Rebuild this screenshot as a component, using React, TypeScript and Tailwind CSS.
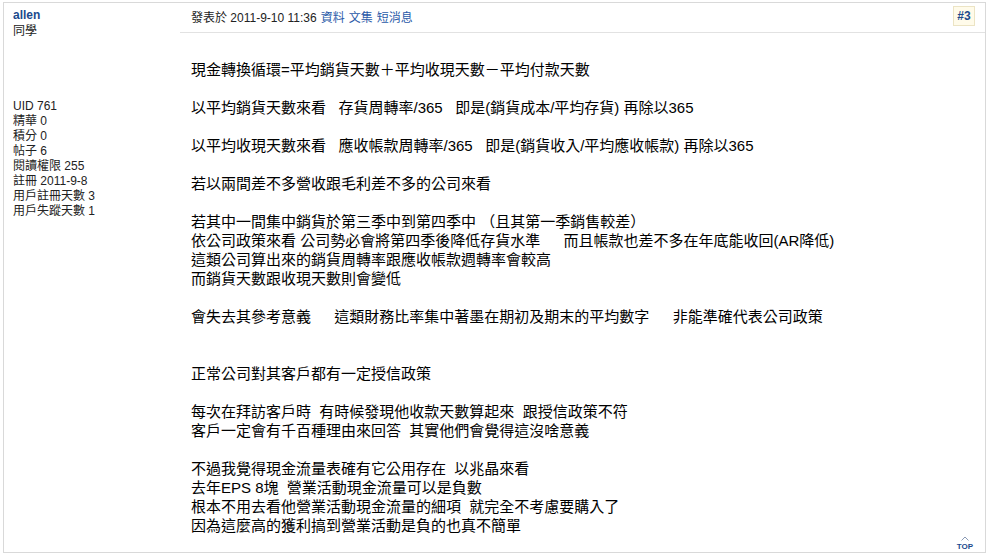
import React from 'react';

const FONT = "font-['Liberation_Sans','Noto_Sans_CJK_TC',sans-serif]";

const stats: [string, string][] = [
  ['UID', '761'],
  ['精華', '0'],
  ['積分', '0'],
  ['帖子', '6'],
  ['閱讀權限', '255'],
  ['註冊', '2011-9-8'],
  ['用戶註冊天數', '3'],
  ['用戶失蹤天數', '1'],
];

// post body, empty strings are blank lines
const lines: string[] = [
  '現金轉換循環=平均銷貨天數＋平均收現天數－平均付款天數',
  '',
  '以平均銷貨天數來看   存貨周轉率/365   即是(銷貨成本/平均存貨) 再除以365',
  '',
  '以平均收現天數來看   應收帳款周轉率/365   即是(銷貨收入/平均應收帳款) 再除以365',
  '',
  '若以兩間差不多營收跟毛利差不多的公司來看',
  '',
  '若其中一間集中銷貨於第三季中到第四季中 （且其第一季銷售較差）',
  '依公司政策來看 公司勢必會將第四季後降低存貨水準　  而且帳款也差不多在年底能收回(AR降低)',
  '這類公司算出來的銷貨周轉率跟應收帳款週轉率會較高',
  '而銷貨天數跟收現天數則會變低',
  '',
  '會失去其參考意義　  這類財務比率集中著墨在期初及期末的平均數字　  非能準確代表公司政策',
  '',
  '',
  '正常公司對其客戶都有一定授信政策',
  '',
  '每次在拜訪客戶時  有時候發現他收款天數算起來  跟授信政策不符',
  '客戶一定會有千百種理由來回答  其實他們會覺得這沒啥意義',
  '',
  '不過我覺得現金流量表確有它公用存在  以兆晶來看',
  '去年EPS 8塊  營業活動現金流量可以是負數',
  '根本不用去看他營業活動現金流量的細項  就完全不考慮要購入了',
  '因為這麼高的獲利搞到營業活動是負的也真不簡單',
];

function Sidebar() {
  return (
    <div className="w-[176px] shrink-0 pl-[9px] pt-[4px] text-[12px] text-[#222]">
      <div className="leading-[16px]">
        <div className="font-bold text-[#1b4a8c]">allen</div>
        <div>同學</div>
      </div>
      <div className="mt-[60px] leading-[15px]">
        {stats.map(([k, v]) => (
          <div key={k}>
            {k} {v}
          </div>
        ))}
      </div>
    </div>
  );
}

function PostHeader() {
  return (
    <div className="h-[30px] flex items-center justify-between border-b border-[#e2e2e2] pl-[11px] pr-[10px] text-[12px]">
      <div className="flex items-center gap-[4px] text-[#222]">
        <span>發表於 2011-9-10 11:36</span>
        <span className="text-[#2a5aa8]">資料</span>
        <span className="text-[#2a5aa8]">文集</span>
        <span className="text-[#2a5aa8]">短消息</span>
      </div>
      <span className="mt-[-3px] h-[20px] w-[22px] flex items-center justify-center border border-[#ece4c4] bg-[#fffbea] font-bold text-[#1b4a8c] leading-none">
        #3
      </span>
    </div>
  );
}

export default function App() {
  return (
    <div className={`w-[990px] h-[556px] bg-white pt-[2px] pl-[3px] ${FONT}`}>
      <div className="w-[983px] h-[551px] border border-[#d9d9d9] flex">
        <Sidebar />

        <div className="flex-1 flex flex-col min-w-0">
          <PostHeader />

          {/* message body */}
          <div className="flex-1 pl-[11px] pt-[27px] text-[15px] leading-[19px] text-black">
            {lines.map((line, i) => (
              <div key={i} className="h-[19px] whitespace-pre">
                {line || '\u00a0'}
              </div>
            ))}
          </div>

          <div className="flex justify-end pr-[12px] pb-[1px]">
            <div className="flex flex-col items-center text-[#1b4a8c]">
              <svg width="8" height="5" viewBox="0 0 8 5" className="mb-[1px]">
                <path d="M0.5 4.5 L4 1 L7.5 4.5" fill="none" stroke="#8a9ab5" strokeWidth="1" />
              </svg>
              <span className="text-[8px] font-bold leading-[9px]">TOP</span>
            </div>
          </div>
        </div>
      </div>
    </div>
  );
}
